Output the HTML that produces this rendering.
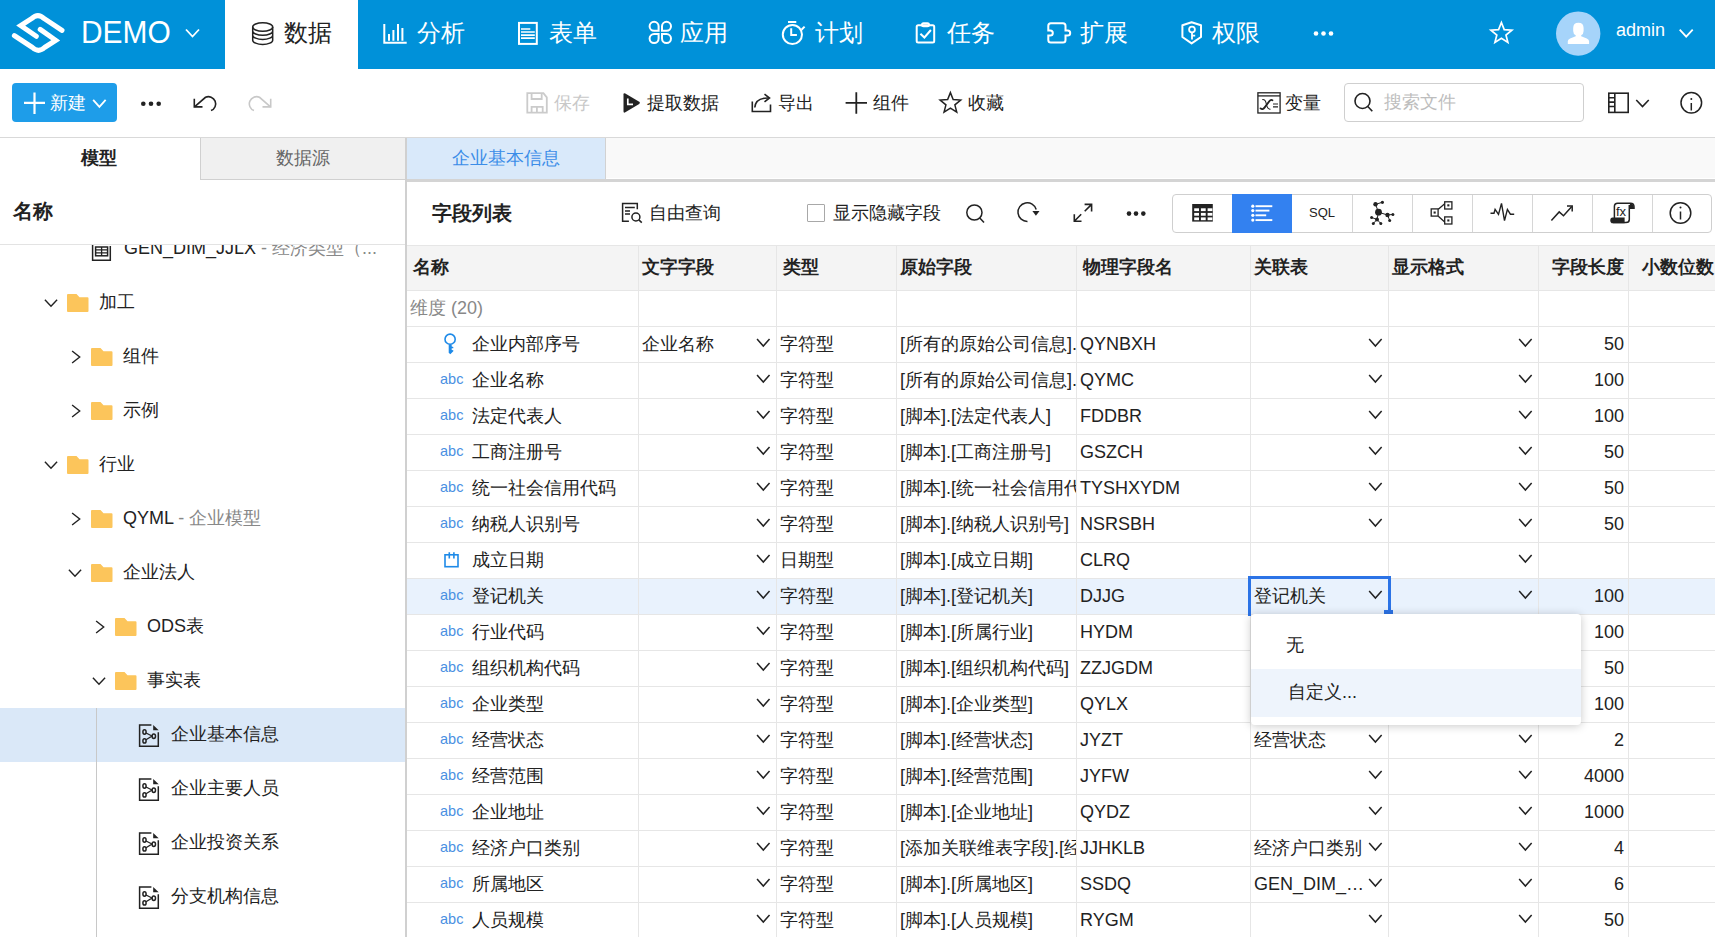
<!DOCTYPE html><html><head><meta charset="utf-8"><style>
*{margin:0;padding:0;box-sizing:border-box}
html,body{width:1715px;height:937px;overflow:hidden}
body{position:relative;font-family:"Liberation Sans",sans-serif;color:#222;background:#fff}
.a{position:absolute;white-space:nowrap}
.t18{font-size:18px;line-height:20px}
svg{position:absolute;left:0;top:0;overflow:visible}
</style></head><body>
<div class="a" style="left:0px;top:0px;width:1715px;height:69px;background:#0091d9"></div>
<div class="a" style="left:225px;top:0px;width:133px;height:69px;background:#fff"></div>
<div class="a" style="left:81px;top:16px;font-size:32px;line-height:32px;color:#fff;transform:scaleX(0.935);transform-origin:0 0">DEMO</div>
<div class="a" style="left:284px;top:20px;font-size:24px;line-height:26px;color:#222;">数据</div>
<div class="a" style="left:417px;top:20px;font-size:24px;line-height:26px;color:#fff;">分析</div>
<div class="a" style="left:549px;top:20px;font-size:24px;line-height:26px;color:#fff;">表单</div>
<div class="a" style="left:680px;top:20px;font-size:24px;line-height:26px;color:#fff;">应用</div>
<div class="a" style="left:815px;top:20px;font-size:24px;line-height:26px;color:#fff;">计划</div>
<div class="a" style="left:947px;top:20px;font-size:24px;line-height:26px;color:#fff;">任务</div>
<div class="a" style="left:1080px;top:20px;font-size:24px;line-height:26px;color:#fff;">扩展</div>
<div class="a" style="left:1212px;top:20px;font-size:24px;line-height:26px;color:#fff;">权限</div>
<div class="a" style="left:1616px;top:20px;font-size:18px;line-height:20px;color:#fff;">admin</div>
<div class="a" style="left:0px;top:137px;width:1715px;height:1px;background:#d9d9d9"></div>
<div class="a" style="left:12px;top:83px;width:105px;height:39px;background:#1e9de9;border-radius:4px"></div>
<div class="a" style="left:50px;top:93px;font-size:18px;line-height:20px;color:#fff;">新建</div>
<div class="a" style="left:554px;top:93px;font-size:18px;line-height:20px;color:#c8c8c8;">保存</div>
<div class="a" style="left:647px;top:93px;font-size:18px;line-height:20px;color:#222;">提取数据</div>
<div class="a" style="left:778px;top:93px;font-size:18px;line-height:20px;color:#222;">导出</div>
<div class="a" style="left:873px;top:93px;font-size:18px;line-height:20px;color:#222;">组件</div>
<div class="a" style="left:968px;top:93px;font-size:18px;line-height:20px;color:#222;">收藏</div>
<div class="a" style="left:1285px;top:93px;font-size:18px;line-height:20px;color:#222;">变量</div>
<div class="a" style="left:1344px;top:83px;width:240px;height:39px;border:1px solid #cfcfcf;border-radius:4px"></div>
<div class="a" style="left:1384px;top:92px;font-size:18px;line-height:20px;color:#bdbdbd;">搜索文件</div>
<div class="a" style="left:200px;top:138px;width:205px;height:42px;background:#f0f0f0;border-left:1px solid #d0d0d0;border-bottom:1px solid #d0d0d0"></div>
<div class="a" style="left:81px;top:148px;font-size:18px;line-height:20px;color:#222;"><b>模型</b></div>
<div class="a" style="left:276px;top:148px;font-size:18px;line-height:20px;color:#666;">数据源</div>
<div class="a" style="left:13px;top:200px;font-size:19.5px;line-height:22px;color:#222;"><b>名称</b></div>
<div class="a" style="left:0;top:245px;width:405px;height:692px;overflow:hidden">
<div class="a" style="left:0;top:463px;width:405px;height:54px;background:#dae8f8"></div>
<div class="a" style="left:96px;top:463px;width:1px;height:700px;background:#c8c8c8"></div>
<div class="a" style="left:124px;top:-7px;font-size:18px;line-height:20px;color:#222">GEN_DIM_JJLX<span style="color:#888"> - 经济类型（...</span></div>
<div class="a" style="left:99px;top:47px;font-size:18px;line-height:20px;color:#222">加工</div>
<div class="a" style="left:123px;top:101px;font-size:18px;line-height:20px;color:#222">组件</div>
<div class="a" style="left:123px;top:155px;font-size:18px;line-height:20px;color:#222">示例</div>
<div class="a" style="left:99px;top:209px;font-size:18px;line-height:20px;color:#222">行业</div>
<div class="a" style="left:123px;top:263px;font-size:18px;line-height:20px;color:#222">QYML<span style="color:#888"> - 企业模型</span></div>
<div class="a" style="left:123px;top:317px;font-size:18px;line-height:20px;color:#222">企业法人</div>
<div class="a" style="left:147px;top:371px;font-size:18px;line-height:20px;color:#222">ODS表</div>
<div class="a" style="left:147px;top:425px;font-size:18px;line-height:20px;color:#222">事实表</div>
<div class="a" style="left:171px;top:479px;font-size:18px;line-height:20px;color:#222">企业基本信息</div>
<div class="a" style="left:171px;top:533px;font-size:18px;line-height:20px;color:#222">企业主要人员</div>
<div class="a" style="left:171px;top:587px;font-size:18px;line-height:20px;color:#222">企业投资关系</div>
<div class="a" style="left:171px;top:641px;font-size:18px;line-height:20px;color:#222">分支机构信息</div>
</div>
<div class="a" style="left:405px;top:138px;width:2px;height:799px;background:#d0d0d0"></div>
<div class="a" style="left:0px;top:244px;width:405px;height:1px;background:#e3e3e3"></div>
<div class="a" style="left:407px;top:138px;width:1308px;height:41px;background:#f9f9f9;border-left:1px solid #fff;border-bottom:1px solid #fff"></div>
<div class="a" style="left:407px;top:138px;width:199px;height:41px;background:#d9e9fa;border-right:1px solid #d2d2d2"></div>
<div class="a" style="left:452px;top:148px;font-size:18px;line-height:20px;color:#3b8de8;">企业基本信息</div>
<div class="a" style="left:407px;top:179px;width:1308px;height:3px;background:#d4d4d4"></div>
<div class="a" style="left:432px;top:202px;font-size:19.6px;line-height:22px;color:#222;"><b>字段列表</b></div>
<div class="a" style="left:649px;top:203px;font-size:18px;line-height:20px;color:#222;">自由查询</div>
<div class="a" style="left:807px;top:204px;width:18px;height:18px;border:1.5px solid #a8a8a8;border-radius:1px"></div>
<div class="a" style="left:833px;top:203px;font-size:18px;line-height:20px;color:#222;">显示隐藏字段</div>
<div class="a" style="left:1172px;top:194px;width:540px;height:39px;border:1px solid #cfcfcf;border-radius:4px"></div>
<div class="a" style="left:1232px;top:194px;width:60px;height:39px;background:#3381f0"></div>
<div class="a" style="left:1352px;top:195px;width:1px;height:37px;background:#d6d6d6"></div>
<div class="a" style="left:1412px;top:195px;width:1px;height:37px;background:#d6d6d6"></div>
<div class="a" style="left:1472px;top:195px;width:1px;height:37px;background:#d6d6d6"></div>
<div class="a" style="left:1532px;top:195px;width:1px;height:37px;background:#d6d6d6"></div>
<div class="a" style="left:1592px;top:195px;width:1px;height:37px;background:#d6d6d6"></div>
<div class="a" style="left:1652px;top:195px;width:1px;height:37px;background:#d6d6d6"></div>
<div class="a" style="left:1309px;top:205px;font-size:13px;line-height:16px;color:#222;">SQL</div>
<div class="a" style="left:407px;top:245px;width:1308px;height:46px;background:#f4f4f4;border-top:1px solid #e6e6e6;border-bottom:1px solid #e6e6e6"></div>
<div class="a" style="left:413px;top:256.5px;font-size:18px;line-height:20px;color:#222;"><b>名称</b></div>
<div class="a" style="left:642px;top:256.5px;font-size:18px;line-height:20px;color:#222;"><b>文字字段</b></div>
<div class="a" style="left:783px;top:256.5px;font-size:18px;line-height:20px;color:#222;"><b>类型</b></div>
<div class="a" style="left:900px;top:256.5px;font-size:18px;line-height:20px;color:#222;"><b>原始字段</b></div>
<div class="a" style="left:1083px;top:256.5px;font-size:18px;line-height:20px;color:#222;"><b>物理字段名</b></div>
<div class="a" style="left:1254px;top:256.5px;font-size:18px;line-height:20px;color:#222;"><b>关联表</b></div>
<div class="a" style="left:1392px;top:256.5px;font-size:18px;line-height:20px;color:#222;"><b>显示格式</b></div>
<div class="a" style="left:1552px;top:256.5px;font-size:18px;line-height:20px;color:#222;"><b>字段长度</b></div>
<div class="a" style="left:1642px;top:256.5px;font-size:18px;line-height:20px;color:#222;"><b>小数位数</b></div>
<div class="a" style="left:410px;top:298px;font-size:18px;line-height:20px;color:#888;">维度 (20)</div>
<div class="a" style="left:407px;top:578px;width:1308px;height:36px;background:#e9f2fd"></div>
<div class="a" style="left:407px;top:326px;width:1308px;height:1px;background:#e6e6e6"></div>
<div class="a" style="left:407px;top:362px;width:1308px;height:1px;background:#e6e6e6"></div>
<div class="a" style="left:407px;top:398px;width:1308px;height:1px;background:#e6e6e6"></div>
<div class="a" style="left:407px;top:434px;width:1308px;height:1px;background:#e6e6e6"></div>
<div class="a" style="left:407px;top:470px;width:1308px;height:1px;background:#e6e6e6"></div>
<div class="a" style="left:407px;top:506px;width:1308px;height:1px;background:#e6e6e6"></div>
<div class="a" style="left:407px;top:542px;width:1308px;height:1px;background:#e6e6e6"></div>
<div class="a" style="left:407px;top:578px;width:1308px;height:1px;background:#e6e6e6"></div>
<div class="a" style="left:407px;top:614px;width:1308px;height:1px;background:#e6e6e6"></div>
<div class="a" style="left:407px;top:650px;width:1308px;height:1px;background:#e6e6e6"></div>
<div class="a" style="left:407px;top:686px;width:1308px;height:1px;background:#e6e6e6"></div>
<div class="a" style="left:407px;top:722px;width:1308px;height:1px;background:#e6e6e6"></div>
<div class="a" style="left:407px;top:758px;width:1308px;height:1px;background:#e6e6e6"></div>
<div class="a" style="left:407px;top:794px;width:1308px;height:1px;background:#e6e6e6"></div>
<div class="a" style="left:407px;top:830px;width:1308px;height:1px;background:#e6e6e6"></div>
<div class="a" style="left:407px;top:866px;width:1308px;height:1px;background:#e6e6e6"></div>
<div class="a" style="left:407px;top:902px;width:1308px;height:1px;background:#e6e6e6"></div>
<div class="a" style="left:407px;top:938px;width:1308px;height:1px;background:#e6e6e6"></div>
<div class="a" style="left:638px;top:245px;width:1px;height:692px;background:#e6e6e6"></div>
<div class="a" style="left:776px;top:245px;width:1px;height:692px;background:#e6e6e6"></div>
<div class="a" style="left:896px;top:245px;width:1px;height:692px;background:#e6e6e6"></div>
<div class="a" style="left:1076px;top:245px;width:1px;height:692px;background:#e6e6e6"></div>
<div class="a" style="left:1250px;top:245px;width:1px;height:692px;background:#e6e6e6"></div>
<div class="a" style="left:1388px;top:245px;width:1px;height:692px;background:#e6e6e6"></div>
<div class="a" style="left:1538px;top:245px;width:1px;height:692px;background:#e6e6e6"></div>
<div class="a" style="left:1628px;top:245px;width:1px;height:692px;background:#e6e6e6"></div>
<div class="a" style="left:472px;top:334px;font-size:18px;line-height:20px;color:#222;">企业内部序号</div>
<div class="a" style="left:642px;top:334px;font-size:18px;line-height:20px;color:#222;">企业名称</div>
<div class="a" style="left:780px;top:334px;font-size:18px;line-height:20px;color:#222;">字符型</div>
<div class="a" style="left:900px;top:334px;width:176px;overflow:hidden;font-size:18px;line-height:20px;color:#222">[所有的原始公司信息].[企业内部序号]</div>
<div class="a" style="left:1080px;top:334px;font-size:18px;line-height:20px;color:#222;">QYNBXH</div>
<div class="a" style="left:1540px;top:334px;width:84px;text-align:right;font-size:18px;line-height:20px;color:#222">50</div>
<div class="a" style="left:472px;top:370px;font-size:18px;line-height:20px;color:#222;">企业名称</div>
<div class="a" style="left:440px;top:371px;font-size:14.5px;line-height:16px;color:#4a90e2;">abc</div>
<div class="a" style="left:780px;top:370px;font-size:18px;line-height:20px;color:#222;">字符型</div>
<div class="a" style="left:900px;top:370px;width:176px;overflow:hidden;font-size:18px;line-height:20px;color:#222">[所有的原始公司信息].[企业名称]</div>
<div class="a" style="left:1080px;top:370px;font-size:18px;line-height:20px;color:#222;">QYMC</div>
<div class="a" style="left:1540px;top:370px;width:84px;text-align:right;font-size:18px;line-height:20px;color:#222">100</div>
<div class="a" style="left:472px;top:406px;font-size:18px;line-height:20px;color:#222;">法定代表人</div>
<div class="a" style="left:440px;top:407px;font-size:14.5px;line-height:16px;color:#4a90e2;">abc</div>
<div class="a" style="left:780px;top:406px;font-size:18px;line-height:20px;color:#222;">字符型</div>
<div class="a" style="left:900px;top:406px;width:176px;overflow:hidden;font-size:18px;line-height:20px;color:#222">[脚本].[法定代表人]</div>
<div class="a" style="left:1080px;top:406px;font-size:18px;line-height:20px;color:#222;">FDDBR</div>
<div class="a" style="left:1540px;top:406px;width:84px;text-align:right;font-size:18px;line-height:20px;color:#222">100</div>
<div class="a" style="left:472px;top:442px;font-size:18px;line-height:20px;color:#222;">工商注册号</div>
<div class="a" style="left:440px;top:443px;font-size:14.5px;line-height:16px;color:#4a90e2;">abc</div>
<div class="a" style="left:780px;top:442px;font-size:18px;line-height:20px;color:#222;">字符型</div>
<div class="a" style="left:900px;top:442px;width:176px;overflow:hidden;font-size:18px;line-height:20px;color:#222">[脚本].[工商注册号]</div>
<div class="a" style="left:1080px;top:442px;font-size:18px;line-height:20px;color:#222;">GSZCH</div>
<div class="a" style="left:1540px;top:442px;width:84px;text-align:right;font-size:18px;line-height:20px;color:#222">50</div>
<div class="a" style="left:472px;top:478px;font-size:18px;line-height:20px;color:#222;">统一社会信用代码</div>
<div class="a" style="left:440px;top:479px;font-size:14.5px;line-height:16px;color:#4a90e2;">abc</div>
<div class="a" style="left:780px;top:478px;font-size:18px;line-height:20px;color:#222;">字符型</div>
<div class="a" style="left:900px;top:478px;width:176px;overflow:hidden;font-size:18px;line-height:20px;color:#222">[脚本].[统一社会信用代码]</div>
<div class="a" style="left:1080px;top:478px;font-size:18px;line-height:20px;color:#222;">TYSHXYDM</div>
<div class="a" style="left:1540px;top:478px;width:84px;text-align:right;font-size:18px;line-height:20px;color:#222">50</div>
<div class="a" style="left:472px;top:514px;font-size:18px;line-height:20px;color:#222;">纳税人识别号</div>
<div class="a" style="left:440px;top:515px;font-size:14.5px;line-height:16px;color:#4a90e2;">abc</div>
<div class="a" style="left:780px;top:514px;font-size:18px;line-height:20px;color:#222;">字符型</div>
<div class="a" style="left:900px;top:514px;width:176px;overflow:hidden;font-size:18px;line-height:20px;color:#222">[脚本].[纳税人识别号]</div>
<div class="a" style="left:1080px;top:514px;font-size:18px;line-height:20px;color:#222;">NSRSBH</div>
<div class="a" style="left:1540px;top:514px;width:84px;text-align:right;font-size:18px;line-height:20px;color:#222">50</div>
<div class="a" style="left:472px;top:550px;font-size:18px;line-height:20px;color:#222;">成立日期</div>
<div class="a" style="left:780px;top:550px;font-size:18px;line-height:20px;color:#222;">日期型</div>
<div class="a" style="left:900px;top:550px;width:176px;overflow:hidden;font-size:18px;line-height:20px;color:#222">[脚本].[成立日期]</div>
<div class="a" style="left:1080px;top:550px;font-size:18px;line-height:20px;color:#222;">CLRQ</div>
<div class="a" style="left:472px;top:586px;font-size:18px;line-height:20px;color:#222;">登记机关</div>
<div class="a" style="left:440px;top:587px;font-size:14.5px;line-height:16px;color:#4a90e2;">abc</div>
<div class="a" style="left:780px;top:586px;font-size:18px;line-height:20px;color:#222;">字符型</div>
<div class="a" style="left:900px;top:586px;width:176px;overflow:hidden;font-size:18px;line-height:20px;color:#222">[脚本].[登记机关]</div>
<div class="a" style="left:1080px;top:586px;font-size:18px;line-height:20px;color:#222;">DJJG</div>
<div class="a" style="left:1254px;top:586px;font-size:18px;line-height:20px;color:#222;">登记机关</div>
<div class="a" style="left:1540px;top:586px;width:84px;text-align:right;font-size:18px;line-height:20px;color:#222">100</div>
<div class="a" style="left:472px;top:622px;font-size:18px;line-height:20px;color:#222;">行业代码</div>
<div class="a" style="left:440px;top:623px;font-size:14.5px;line-height:16px;color:#4a90e2;">abc</div>
<div class="a" style="left:780px;top:622px;font-size:18px;line-height:20px;color:#222;">字符型</div>
<div class="a" style="left:900px;top:622px;width:176px;overflow:hidden;font-size:18px;line-height:20px;color:#222">[脚本].[所属行业]</div>
<div class="a" style="left:1080px;top:622px;font-size:18px;line-height:20px;color:#222;">HYDM</div>
<div class="a" style="left:1540px;top:622px;width:84px;text-align:right;font-size:18px;line-height:20px;color:#222">100</div>
<div class="a" style="left:472px;top:658px;font-size:18px;line-height:20px;color:#222;">组织机构代码</div>
<div class="a" style="left:440px;top:659px;font-size:14.5px;line-height:16px;color:#4a90e2;">abc</div>
<div class="a" style="left:780px;top:658px;font-size:18px;line-height:20px;color:#222;">字符型</div>
<div class="a" style="left:900px;top:658px;width:176px;overflow:hidden;font-size:18px;line-height:20px;color:#222">[脚本].[组织机构代码]</div>
<div class="a" style="left:1080px;top:658px;font-size:18px;line-height:20px;color:#222;">ZZJGDM</div>
<div class="a" style="left:1540px;top:658px;width:84px;text-align:right;font-size:18px;line-height:20px;color:#222">50</div>
<div class="a" style="left:472px;top:694px;font-size:18px;line-height:20px;color:#222;">企业类型</div>
<div class="a" style="left:440px;top:695px;font-size:14.5px;line-height:16px;color:#4a90e2;">abc</div>
<div class="a" style="left:780px;top:694px;font-size:18px;line-height:20px;color:#222;">字符型</div>
<div class="a" style="left:900px;top:694px;width:176px;overflow:hidden;font-size:18px;line-height:20px;color:#222">[脚本].[企业类型]</div>
<div class="a" style="left:1080px;top:694px;font-size:18px;line-height:20px;color:#222;">QYLX</div>
<div class="a" style="left:1540px;top:694px;width:84px;text-align:right;font-size:18px;line-height:20px;color:#222">100</div>
<div class="a" style="left:472px;top:730px;font-size:18px;line-height:20px;color:#222;">经营状态</div>
<div class="a" style="left:440px;top:731px;font-size:14.5px;line-height:16px;color:#4a90e2;">abc</div>
<div class="a" style="left:780px;top:730px;font-size:18px;line-height:20px;color:#222;">字符型</div>
<div class="a" style="left:900px;top:730px;width:176px;overflow:hidden;font-size:18px;line-height:20px;color:#222">[脚本].[经营状态]</div>
<div class="a" style="left:1080px;top:730px;font-size:18px;line-height:20px;color:#222;">JYZT</div>
<div class="a" style="left:1254px;top:730px;font-size:18px;line-height:20px;color:#222;">经营状态</div>
<div class="a" style="left:1540px;top:730px;width:84px;text-align:right;font-size:18px;line-height:20px;color:#222">2</div>
<div class="a" style="left:472px;top:766px;font-size:18px;line-height:20px;color:#222;">经营范围</div>
<div class="a" style="left:440px;top:767px;font-size:14.5px;line-height:16px;color:#4a90e2;">abc</div>
<div class="a" style="left:780px;top:766px;font-size:18px;line-height:20px;color:#222;">字符型</div>
<div class="a" style="left:900px;top:766px;width:176px;overflow:hidden;font-size:18px;line-height:20px;color:#222">[脚本].[经营范围]</div>
<div class="a" style="left:1080px;top:766px;font-size:18px;line-height:20px;color:#222;">JYFW</div>
<div class="a" style="left:1540px;top:766px;width:84px;text-align:right;font-size:18px;line-height:20px;color:#222">4000</div>
<div class="a" style="left:472px;top:802px;font-size:18px;line-height:20px;color:#222;">企业地址</div>
<div class="a" style="left:440px;top:803px;font-size:14.5px;line-height:16px;color:#4a90e2;">abc</div>
<div class="a" style="left:780px;top:802px;font-size:18px;line-height:20px;color:#222;">字符型</div>
<div class="a" style="left:900px;top:802px;width:176px;overflow:hidden;font-size:18px;line-height:20px;color:#222">[脚本].[企业地址]</div>
<div class="a" style="left:1080px;top:802px;font-size:18px;line-height:20px;color:#222;">QYDZ</div>
<div class="a" style="left:1540px;top:802px;width:84px;text-align:right;font-size:18px;line-height:20px;color:#222">1000</div>
<div class="a" style="left:472px;top:838px;font-size:18px;line-height:20px;color:#222;">经济户口类别</div>
<div class="a" style="left:440px;top:839px;font-size:14.5px;line-height:16px;color:#4a90e2;">abc</div>
<div class="a" style="left:780px;top:838px;font-size:18px;line-height:20px;color:#222;">字符型</div>
<div class="a" style="left:900px;top:838px;width:176px;overflow:hidden;font-size:18px;line-height:20px;color:#222">[添加关联维表字段].[经济户口类别]</div>
<div class="a" style="left:1080px;top:838px;font-size:18px;line-height:20px;color:#222;">JJHKLB</div>
<div class="a" style="left:1254px;top:838px;font-size:18px;line-height:20px;color:#222;">经济户口类别</div>
<div class="a" style="left:1540px;top:838px;width:84px;text-align:right;font-size:18px;line-height:20px;color:#222">4</div>
<div class="a" style="left:472px;top:874px;font-size:18px;line-height:20px;color:#222;">所属地区</div>
<div class="a" style="left:440px;top:875px;font-size:14.5px;line-height:16px;color:#4a90e2;">abc</div>
<div class="a" style="left:780px;top:874px;font-size:18px;line-height:20px;color:#222;">字符型</div>
<div class="a" style="left:900px;top:874px;width:176px;overflow:hidden;font-size:18px;line-height:20px;color:#222">[脚本].[所属地区]</div>
<div class="a" style="left:1080px;top:874px;font-size:18px;line-height:20px;color:#222;">SSDQ</div>
<div class="a" style="left:1254px;top:874px;font-size:18px;line-height:20px;color:#222;">GEN_DIM_…</div>
<div class="a" style="left:1540px;top:874px;width:84px;text-align:right;font-size:18px;line-height:20px;color:#222">6</div>
<div class="a" style="left:472px;top:910px;font-size:18px;line-height:20px;color:#222;">人员规模</div>
<div class="a" style="left:440px;top:911px;font-size:14.5px;line-height:16px;color:#4a90e2;">abc</div>
<div class="a" style="left:780px;top:910px;font-size:18px;line-height:20px;color:#222;">字符型</div>
<div class="a" style="left:900px;top:910px;width:176px;overflow:hidden;font-size:18px;line-height:20px;color:#222">[脚本].[人员规模]</div>
<div class="a" style="left:1080px;top:910px;font-size:18px;line-height:20px;color:#222;">RYGM</div>
<div class="a" style="left:1540px;top:910px;width:84px;text-align:right;font-size:18px;line-height:20px;color:#222">50</div>
<div class="a" style="left:1248px;top:576px;width:143px;height:40px;border:3px solid #2b73e6;border-bottom:none"></div>
<div class="a" style="left:1384px;top:610px;width:9px;height:4px;background:#2b73e6"></div>
<svg width="1715" height="937" viewBox="0 0 1715 937"><path d="M62,30.3 L44.2,18.6 Q37.9,12.6 31.6,18.6 L20.7,25.6 L36.3,36.3" fill="none" stroke="#fff" stroke-width="5" stroke-linecap="round" stroke-linejoin="miter"/><path d="M14.4,35.6 L32.2,47.3 Q38.5,53.3 44.8,47.3 L55.7,40.3 L40.2,29.4" fill="none" stroke="#fff" stroke-width="5" stroke-linecap="round" stroke-linejoin="miter"/><path d="M186.0,29.5 L192.5,36.5 L199.0,29.5" fill="none" stroke="#fff" stroke-width="1.8"/><g fill="none" stroke="#222" stroke-width="1.5"><ellipse cx="262.7" cy="27" rx="10" ry="4.2"/><path d="M252.7,27 V40.2 M272.7,27 V40.2 M252.7,31 A10,4.2 0 0 0 272.7,31 M252.7,35.2 A10,4.2 0 0 0 272.7,35.2 M252.7,40.2 A10,4.2 0 0 0 272.7,40.2"/></g><g fill="none" stroke="#fff" stroke-width="2"><path d="M384.3,24 V42.8 H406.7"/><path d="M389,34 V40.8 M393.4,30 V40.8 M398,24 V40.8 M402.4,28 V40.8"/></g><g fill="none" stroke="#fff"><rect x="519" y="22.9" width="17.8" height="21" stroke-width="2"/><path d="M521,29 H530.3 M521,32 H534.8 M521,35.1 H534.8 M521,38.1 H534.8" stroke-width="1.6"/></g><path d="M654.1,30.8 A4.5,4.5 0 1 1 658.6,26.3 L658.6,30.8 Z M662.0,26.3 A4.5,4.5 0 1 1 666.5,30.8 L662.0,30.8 Z M658.6,38.6 A4.5,4.5 0 1 1 654.1,34.1 L658.6,34.1 Z M666.5,34.1 A4.5,4.5 0 1 1 662.0,38.6 L662.0,34.1 Z" fill="none" stroke="#fff" stroke-width="2"/><g fill="none" stroke="#fff" stroke-width="2"><circle cx="792.4" cy="34.5" r="9.6"/><path d="M788,22 H796.3 M801.5,29.8 L804.6,26.6 M791.2,28.2 V35.1 H796.9"/></g><g fill="none" stroke="#fff" stroke-width="2"><rect x="916.7" y="25.3" width="17.5" height="17.3" rx="1.5"/><rect x="922" y="23.3" width="7" height="3" rx="1.5"/><path d="M920.4,33.7 L924.4,37.5 L930.9,30"/></g><path d="M1050.8,23.3 H1063 Q1065.5,23.3 1065.5,25.8 V30.5 H1067.7 A2.5,2.5 0 0 1 1067.7,35.5 H1065.5 V40.1 Q1065.5,42.6 1063,42.6 H1050.8 Q1048.3,42.6 1048.3,40.1 V35.5 H1050.3 A2.5,2.5 0 0 0 1050.3,30.5 H1048.3 V25.8 Q1048.3,23.3 1050.8,23.3 Z" fill="none" stroke="#fff" stroke-width="2"/><g fill="none" stroke="#fff" stroke-width="2"><path d="M1191.6,22.2 L1182.4,25.2 V37 L1191.6,43.4 L1201,37 V25.2 Z" stroke-linejoin="round"/><circle cx="1192" cy="29.6" r="2.9" stroke-width="1.8"/><path d="M1192,32.5 V39.5 M1192,35.7 H1195.2" stroke-width="1.8"/></g><circle cx="1316" cy="33.5" r="2.3" fill="#fff"/><circle cx="1323.5" cy="33.5" r="2.3" fill="#fff"/><circle cx="1331" cy="33.5" r="2.3" fill="#fff"/><polygon points="1501.40,22.50 1504.22,29.62 1511.86,30.10 1505.97,34.98 1507.87,42.40 1501.40,38.30 1494.93,42.40 1496.83,34.98 1490.94,30.10 1498.58,29.62" fill="none" stroke="#fff" stroke-width="1.7" stroke-linejoin="miter"/><circle cx="1578.2" cy="33.6" r="22.2" fill="#a6d4fa"/><path d="M1573.2,28 Q1573.2,22.8 1578.4,22.8 Q1583.6,22.8 1583.6,28 V31 Q1583.6,34.3 1581.2,35.2 V36.2 L1586.8,38.4 Q1589.1,39.3 1589.1,41.2 V43.9 H1567.8 V41.2 Q1567.8,39.3 1570.1,38.4 L1575.7,36.2 V35.2 Q1573.2,34.3 1573.2,31 Z" fill="#fff"/><path d="M1679.7,29.6 L1686.2,36.6 L1692.7,29.6" fill="none" stroke="#fff" stroke-width="1.8"/><path d="M24,102.9 H45 M34.5,92.4 V114" stroke="#fff" stroke-width="2.2"/><path d="M93.15,99.8 L99.4,106.8 L105.65,99.8" fill="none" stroke="#fff" stroke-width="1.8"/><circle cx="143.3" cy="103.8" r="2.3" fill="#222"/><circle cx="151" cy="103.8" r="2.3" fill="#222"/><circle cx="158.7" cy="103.8" r="2.3" fill="#222"/><g fill="none" stroke="#222" stroke-width="1.6"><path d="M194.5,106.8 L205.5,97.3 A7.2,7.2 0 1 1 211,110.6"/><path d="M194.3,98.8 V106.9 H202.5"/></g><g fill="none" stroke="#c8c8c8" stroke-width="1.6"><path d="M270.5,106.8 L259.5,97.3 A7.2,7.2 0 1 0 254,110.6"/><path d="M270.7,98.8 V106.9 H262.5"/></g><g fill="none" stroke="#cbcbcb" stroke-width="1.8"><path d="M527.3,93.2 H543.4 L546.8,97.4 V112.7 H527.3 Z"/><path d="M531.6,93.2 V99 H541.7 V93.2"/><path d="M531.6,112.7 V106.9 H542.7 V112.7 M536.9,106.9 V112.7"/></g><path d="M623.5,94.5 Q623.5,92.6 625.3,93.6 L639.2,101.8 Q640.8,102.9 639.2,104 L625.3,112.3 Q623.5,113.3 623.5,111.3 Z" fill="#222"/><path d="M627.8,98.5 V104.3 H633" fill="none" stroke="#fff" stroke-width="1.7"/><g fill="none" stroke="#222" stroke-width="1.6"><path d="M752.3,101.5 V111.5 H770.5 V104.5"/><path d="M754.8,107.5 Q755.5,97.8 768.5,98"/><path d="M764.5,94.2 L769.5,98 L764.5,101.8"/></g><path d="M845.6,102.9 H867 M856.3,92.2 V113.8" stroke="#222" stroke-width="1.8"/><polygon points="950.40,92.60 953.16,99.60 960.67,100.06 954.87,104.85 956.75,112.14 950.40,108.10 944.05,112.14 945.93,104.85 940.13,100.06 947.64,99.60" fill="none" stroke="#222" stroke-width="1.5" stroke-linejoin="miter"/><g fill="none" stroke="#222" stroke-width="1.5"><rect x="1257.9" y="92.8" width="22.2" height="20.2" stroke-width="1.3"/><path d="M1257.9,95.9 H1280" stroke-width="1.3"/><path d="M1273,104 H1278 M1273,106.8 H1278" stroke-width="1.2"/></g><path d="M1260.6,108.4 Q1262.5,110.2 1264.5,107.6 L1269.3,101.2 Q1270.8,99.2 1272.4,100.2" fill="none" stroke="#222" stroke-width="1.9" stroke-linecap="round"/><path d="M1262.3,99.6 Q1265.3,99.2 1266.2,103.5 Q1267.2,109.2 1270.4,109.4" fill="none" stroke="#222" stroke-width="1.1"/><g fill="none" stroke="#222" stroke-width="1.6"><circle cx="1362.5" cy="101" r="7.5"/><path d="M1367.8,106.5 L1372.3,111.3"/></g><g fill="none" stroke="#222" stroke-width="1.6"><rect x="1608.8" y="93.2" width="19.4" height="19.2"/><path d="M1614.8,93.2 V112.4 M1608.8,97.7 H1614.8 M1608.8,102.1 H1614.8 M1608.8,106.5 H1614.8"/></g><path d="M1636.25,100.05 L1642.5,106.55 L1648.75,100.05" fill="none" stroke="#222" stroke-width="1.6"/><g fill="none" stroke="#222" stroke-width="1.5"><circle cx="1691.3" cy="102.8" r="10.3"/><path d="M1691.3,103 V110.5"/></g><circle cx="1691.3" cy="99" r="1" fill="#222"/><g fill="none" stroke="#222" stroke-width="1.5"><path d="M628.9,221.2 H622.6 V203.5 H637.3 V209.3"/><path d="M625,207.6 H634.8 M625,211.1 H630 M625,213.9 H630"/><circle cx="635.9" cy="217" r="4"/><path d="M638.8,219.9 L641.8,222.6"/></g><g fill="none" stroke="#222" stroke-width="1.5"><circle cx="974.4" cy="212.5" r="7.6"/><path d="M979.8,218 L984,222.5"/></g><g fill="none" stroke="#222" stroke-width="1.5"><path d="M1027.5,221.4 A9.3,9.3 0 1 1 1036.2,209.5"/></g><path d="M1032.4,211 L1039.5,211 L1035.9,215.8 Z" fill="#222"/><g fill="none" stroke="#222" stroke-width="1.6"><path d="M1074.3,214.2 V221.2 H1081.5 M1074.3,221.2 L1081.2,214.3"/><path d="M1084.6,204.4 H1091.6 V211.5 M1091.6,204.4 L1084.7,211.3"/></g><circle cx="1129" cy="213.6" r="2.3" fill="#222"/><circle cx="1136" cy="213.6" r="2.3" fill="#222"/><circle cx="1143.3" cy="213.6" r="2.3" fill="#222"/><g><rect x="1192.2" y="204" width="20.6" height="17.6" fill="#222"/><rect x="1194.2" y="208.3" width="4.8" height="2.8" fill="#fff"/><rect x="1194.2" y="212.9" width="4.8" height="2.8" fill="#fff"/><rect x="1194.2" y="217.4" width="4.8" height="2.8" fill="#fff"/><rect x="1200.9" y="208.3" width="4.8" height="2.8" fill="#fff"/><rect x="1200.9" y="212.9" width="4.8" height="2.8" fill="#fff"/><rect x="1200.9" y="217.4" width="4.8" height="2.8" fill="#fff"/><rect x="1207.6" y="208.3" width="4.8" height="2.8" fill="#fff"/><rect x="1207.6" y="212.9" width="4.8" height="2.8" fill="#fff"/><rect x="1207.6" y="217.4" width="4.8" height="2.8" fill="#fff"/></g><circle cx="1252.8" cy="206.2" r="1.6" fill="#fff"/><path d="M1255.5,206.2 H1272.3" stroke="#fff" stroke-width="1.9"/><circle cx="1252.8" cy="210.6" r="1.6" fill="#fff"/><path d="M1255.5,210.6 H1269.4" stroke="#fff" stroke-width="1.9"/><circle cx="1252.8" cy="215.3" r="1.6" fill="#fff"/><path d="M1255.5,215.3 H1266.2" stroke="#fff" stroke-width="1.9"/><circle cx="1252.8" cy="220.1" r="1.6" fill="#fff"/><path d="M1255.5,220.1 H1272.3" stroke="#fff" stroke-width="1.9"/><g stroke="#222" stroke-width="1" fill="none"><path d="M1375.5,204.3 L1382.4,202.3 M1375.5,204.3 L1378.5,212.2 L1387.5,215 L1392.9,214.4 M1387.5,215 L1389.7,220.4 M1378.5,212.2 L1377,219.6 L1371.6,217.4 M1377,219.6 L1373.3,223.4 M1377,219.6 L1380.8,223.4"/></g><g fill="#222"><circle cx="1378.5" cy="212.2" r="3.4"/><circle cx="1375.5" cy="204.3" r="2.2"/><circle cx="1382.4" cy="202.3" r="1.6"/><circle cx="1387.5" cy="215" r="2.2"/><circle cx="1392.9" cy="214.4" r="1.5"/><circle cx="1389.7" cy="220.4" r="1.5"/><circle cx="1377" cy="219.6" r="2"/><circle cx="1371.6" cy="217.4" r="1.5"/><circle cx="1373.3" cy="223.4" r="1.5"/><circle cx="1380.8" cy="223.4" r="1.5"/></g><g fill="none" stroke="#222" stroke-width="1.3"><rect x="1431.2" y="208.9" width="6.9" height="7.2"/><rect x="1444.7" y="201.8" width="7.2" height="7.2"/><rect x="1444.7" y="216.9" width="7.2" height="7.1"/><path d="M1438.3,209.3 L1444.4,204 M1438.3,216.3 L1444.4,221.8"/></g><g fill="#222"><rect x="1433.6" y="211.5" width="2.1" height="2.1"/><rect x="1447.3" y="204.3" width="2.1" height="2.1"/><rect x="1447.3" y="219.4" width="2.1" height="2.1"/></g><path d="M1490.5,213.3 H1494 L1495.1,209.4 L1498.5,214.4 L1501.5,203.4 L1504.5,220.6 L1507.4,209.4 L1510.4,214.2 H1514.2" fill="none" stroke="#222" stroke-width="1.4" stroke-linejoin="miter"/><g fill="none" stroke="#222" stroke-width="1.5"><path d="M1551.4,220.4 L1559.2,211.9 L1563.5,215.8 L1571.8,206.6"/><path d="M1567,206.1 H1572.2 V211.5"/></g><g fill="none" stroke="#222" stroke-width="1.5"><path d="M1614.4,218 V206.5 Q1614.4,203.2 1617.7,203.2 H1630.5 Q1634,203.2 1634,206.8 V208.2 H1629.3"/><path d="M1629.3,205 V219.5 Q1629.3,222.6 1626,222.6 H1613"/></g><path d="M1630,203.6 Q1633.8,203.8 1633.8,207 V208.3 H1629.5 Z" fill="#222"/><path d="M1612.5,217.6 H1624.6 V223.2 H1612.8 Q1610.3,223.2 1610.3,220.4 Q1610.3,217.6 1612.5,217.6 Z" fill="#222"/><text x="1616" y="215.9" font-family="Liberation Sans" font-size="13" fill="#222">fx</text><g fill="none" stroke="#222" stroke-width="1.5"><circle cx="1680.5" cy="213" r="10.3"/><path d="M1680.5,211.5 V219.5"/></g><circle cx="1680.5" cy="207.5" r="1" fill="#222"/><defs><clipPath id="tc"><rect x="0" y="245" width="405" height="692"/></clipPath></defs><g clip-path="url(#tc)"><path d="M44.9,299.7 L51,306.3 L57.1,299.7" fill="none" stroke="#222" stroke-width="1.4"/><path d="M67,295 Q67,294 68,294 H76.5 L79.5,297.2 H87.5 Q88.5,297.2 88.5,298.2 V311 Q88.5,312 87.5,312 H68 Q67,312 67,311 Z" fill="#fcc55b"/><path d="M72.10000000000001,351.0 L79.7,357 L72.10000000000001,363.0" fill="none" stroke="#222" stroke-width="1.4"/><path d="M91,349 Q91,348 92,348 H100.5 L103.5,351.2 H111.5 Q112.5,351.2 112.5,352.2 V365 Q112.5,366 111.5,366 H92 Q91,366 91,365 Z" fill="#fcc55b"/><path d="M72.10000000000001,405.0 L79.7,411 L72.10000000000001,417.0" fill="none" stroke="#222" stroke-width="1.4"/><path d="M91,403 Q91,402 92,402 H100.5 L103.5,405.2 H111.5 Q112.5,405.2 112.5,406.2 V419 Q112.5,420 111.5,420 H92 Q91,420 91,419 Z" fill="#fcc55b"/><path d="M44.9,461.7 L51,468.3 L57.1,461.7" fill="none" stroke="#222" stroke-width="1.4"/><path d="M67,457 Q67,456 68,456 H76.5 L79.5,459.2 H87.5 Q88.5,459.2 88.5,460.2 V473 Q88.5,474 87.5,474 H68 Q67,474 67,473 Z" fill="#fcc55b"/><path d="M72.10000000000001,513.0 L79.7,519 L72.10000000000001,525.0" fill="none" stroke="#222" stroke-width="1.4"/><path d="M91,511 Q91,510 92,510 H100.5 L103.5,513.2 H111.5 Q112.5,513.2 112.5,514.2 V527 Q112.5,528 111.5,528 H92 Q91,528 91,527 Z" fill="#fcc55b"/><path d="M68.9,569.7 L75,576.3 L81.1,569.7" fill="none" stroke="#222" stroke-width="1.4"/><path d="M91,565 Q91,564 92,564 H100.5 L103.5,567.2 H111.5 Q112.5,567.2 112.5,568.2 V581 Q112.5,582 111.5,582 H92 Q91,582 91,581 Z" fill="#fcc55b"/><path d="M96.10000000000001,621.0 L103.7,627 L96.10000000000001,633.0" fill="none" stroke="#222" stroke-width="1.4"/><path d="M115,619 Q115,618 116,618 H124.5 L127.5,621.2 H135.5 Q136.5,621.2 136.5,622.2 V635 Q136.5,636 135.5,636 H116 Q115,636 115,635 Z" fill="#fcc55b"/><path d="M92.9,677.7 L99,684.3 L105.1,677.7" fill="none" stroke="#222" stroke-width="1.4"/><path d="M115,673 Q115,672 116,672 H124.5 L127.5,675.2 H135.5 Q136.5,675.2 136.5,676.2 V689 Q136.5,690 135.5,690 H116 Q115,690 115,689 Z" fill="#fcc55b"/><g fill="none" stroke="#222" stroke-width="1.5"><path d="M92.6,244 V260.2 H110.3 V246"/><rect x="95.6" y="247" width="12" height="8.8"/><path d="M95.6,249.8 H107.6 M95.6,252.8 H107.6 M101.6,247 V255.8" stroke-width="1.3"/></g><g transform="translate(0,0)"><g fill="none" stroke="#222" stroke-width="1.5"><path d="M151.4,724.9 H139.6 V746.3 H158.3 V732.2"/><ellipse cx="144.5" cy="732" rx="1.6" ry="2.2"/><ellipse cx="144.5" cy="740.9" rx="1.6" ry="2.2"/><ellipse cx="153.8" cy="736.3" rx="1.7" ry="2.2"/><path d="M146,733 L152,736 L146,739.8" stroke-width="1.3"/></g><path d="M153.2,725 V730.3 H158.7 Z" fill="#222"/></g><g transform="translate(0,54)"><g fill="none" stroke="#222" stroke-width="1.5"><path d="M151.4,724.9 H139.6 V746.3 H158.3 V732.2"/><ellipse cx="144.5" cy="732" rx="1.6" ry="2.2"/><ellipse cx="144.5" cy="740.9" rx="1.6" ry="2.2"/><ellipse cx="153.8" cy="736.3" rx="1.7" ry="2.2"/><path d="M146,733 L152,736 L146,739.8" stroke-width="1.3"/></g><path d="M153.2,725 V730.3 H158.7 Z" fill="#222"/></g><g transform="translate(0,108)"><g fill="none" stroke="#222" stroke-width="1.5"><path d="M151.4,724.9 H139.6 V746.3 H158.3 V732.2"/><ellipse cx="144.5" cy="732" rx="1.6" ry="2.2"/><ellipse cx="144.5" cy="740.9" rx="1.6" ry="2.2"/><ellipse cx="153.8" cy="736.3" rx="1.7" ry="2.2"/><path d="M146,733 L152,736 L146,739.8" stroke-width="1.3"/></g><path d="M153.2,725 V730.3 H158.7 Z" fill="#222"/></g><g transform="translate(0,162)"><g fill="none" stroke="#222" stroke-width="1.5"><path d="M151.4,724.9 H139.6 V746.3 H158.3 V732.2"/><ellipse cx="144.5" cy="732" rx="1.6" ry="2.2"/><ellipse cx="144.5" cy="740.9" rx="1.6" ry="2.2"/><ellipse cx="153.8" cy="736.3" rx="1.7" ry="2.2"/><path d="M146,733 L152,736 L146,739.8" stroke-width="1.3"/></g><path d="M153.2,725 V730.3 H158.7 Z" fill="#222"/></g></g><g fill="none" stroke="#1e8ae8" stroke-width="1.6"><circle cx="450.1" cy="339.2" r="5.1"/></g><path d="M448.7,344.6 H451.7 V346.6 L453.3,346.9 V348.3 L451.7,348.3 V349.9 L453.3,350.2 V351.2 L450.3,354.2 L448.7,352.8 Z" fill="#1e8ae8"/><path d="M757.05,339.0 L763.3,346.0 L769.55,339.0" fill="none" stroke="#222" stroke-width="1.5"/><path d="M1369.15,339.0 L1375.4,346.0 L1381.65,339.0" fill="none" stroke="#222" stroke-width="1.5"/><path d="M1519.15,339.0 L1525.4,346.0 L1531.65,339.0" fill="none" stroke="#222" stroke-width="1.5"/><path d="M757.05,375.0 L763.3,382.0 L769.55,375.0" fill="none" stroke="#222" stroke-width="1.5"/><path d="M1369.15,375.0 L1375.4,382.0 L1381.65,375.0" fill="none" stroke="#222" stroke-width="1.5"/><path d="M1519.15,375.0 L1525.4,382.0 L1531.65,375.0" fill="none" stroke="#222" stroke-width="1.5"/><path d="M757.05,411.0 L763.3,418.0 L769.55,411.0" fill="none" stroke="#222" stroke-width="1.5"/><path d="M1369.15,411.0 L1375.4,418.0 L1381.65,411.0" fill="none" stroke="#222" stroke-width="1.5"/><path d="M1519.15,411.0 L1525.4,418.0 L1531.65,411.0" fill="none" stroke="#222" stroke-width="1.5"/><path d="M757.05,447.0 L763.3,454.0 L769.55,447.0" fill="none" stroke="#222" stroke-width="1.5"/><path d="M1369.15,447.0 L1375.4,454.0 L1381.65,447.0" fill="none" stroke="#222" stroke-width="1.5"/><path d="M1519.15,447.0 L1525.4,454.0 L1531.65,447.0" fill="none" stroke="#222" stroke-width="1.5"/><path d="M757.05,483.0 L763.3,490.0 L769.55,483.0" fill="none" stroke="#222" stroke-width="1.5"/><path d="M1369.15,483.0 L1375.4,490.0 L1381.65,483.0" fill="none" stroke="#222" stroke-width="1.5"/><path d="M1519.15,483.0 L1525.4,490.0 L1531.65,483.0" fill="none" stroke="#222" stroke-width="1.5"/><path d="M757.05,519.0 L763.3,526.0 L769.55,519.0" fill="none" stroke="#222" stroke-width="1.5"/><path d="M1369.15,519.0 L1375.4,526.0 L1381.65,519.0" fill="none" stroke="#222" stroke-width="1.5"/><path d="M1519.15,519.0 L1525.4,526.0 L1531.65,519.0" fill="none" stroke="#222" stroke-width="1.5"/><g fill="none" stroke="#1e8ae8" stroke-width="1.6"><rect x="445" y="554.8" width="13" height="11.9"/><path d="M449.3,552.2 V558.6 M453.9,552.2 V558.6"/></g><path d="M757.05,555.0 L763.3,562.0 L769.55,555.0" fill="none" stroke="#222" stroke-width="1.5"/><path d="M1519.15,555.0 L1525.4,562.0 L1531.65,555.0" fill="none" stroke="#222" stroke-width="1.5"/><path d="M757.05,591.0 L763.3,598.0 L769.55,591.0" fill="none" stroke="#222" stroke-width="1.5"/><path d="M1369.15,591.0 L1375.4,598.0 L1381.65,591.0" fill="none" stroke="#222" stroke-width="1.5"/><path d="M1519.15,591.0 L1525.4,598.0 L1531.65,591.0" fill="none" stroke="#222" stroke-width="1.5"/><path d="M757.05,627.0 L763.3,634.0 L769.55,627.0" fill="none" stroke="#222" stroke-width="1.5"/><path d="M757.05,663.0 L763.3,670.0 L769.55,663.0" fill="none" stroke="#222" stroke-width="1.5"/><path d="M757.05,699.0 L763.3,706.0 L769.55,699.0" fill="none" stroke="#222" stroke-width="1.5"/><path d="M757.05,735.0 L763.3,742.0 L769.55,735.0" fill="none" stroke="#222" stroke-width="1.5"/><path d="M1369.15,735.0 L1375.4,742.0 L1381.65,735.0" fill="none" stroke="#222" stroke-width="1.5"/><path d="M1519.15,735.0 L1525.4,742.0 L1531.65,735.0" fill="none" stroke="#222" stroke-width="1.5"/><path d="M757.05,771.0 L763.3,778.0 L769.55,771.0" fill="none" stroke="#222" stroke-width="1.5"/><path d="M1369.15,771.0 L1375.4,778.0 L1381.65,771.0" fill="none" stroke="#222" stroke-width="1.5"/><path d="M1519.15,771.0 L1525.4,778.0 L1531.65,771.0" fill="none" stroke="#222" stroke-width="1.5"/><path d="M757.05,807.0 L763.3,814.0 L769.55,807.0" fill="none" stroke="#222" stroke-width="1.5"/><path d="M1369.15,807.0 L1375.4,814.0 L1381.65,807.0" fill="none" stroke="#222" stroke-width="1.5"/><path d="M1519.15,807.0 L1525.4,814.0 L1531.65,807.0" fill="none" stroke="#222" stroke-width="1.5"/><path d="M757.05,843.0 L763.3,850.0 L769.55,843.0" fill="none" stroke="#222" stroke-width="1.5"/><path d="M1369.15,843.0 L1375.4,850.0 L1381.65,843.0" fill="none" stroke="#222" stroke-width="1.5"/><path d="M1519.15,843.0 L1525.4,850.0 L1531.65,843.0" fill="none" stroke="#222" stroke-width="1.5"/><path d="M757.05,879.0 L763.3,886.0 L769.55,879.0" fill="none" stroke="#222" stroke-width="1.5"/><path d="M1369.15,879.0 L1375.4,886.0 L1381.65,879.0" fill="none" stroke="#222" stroke-width="1.5"/><path d="M1519.15,879.0 L1525.4,886.0 L1531.65,879.0" fill="none" stroke="#222" stroke-width="1.5"/><path d="M757.05,915.0 L763.3,922.0 L769.55,915.0" fill="none" stroke="#222" stroke-width="1.5"/><path d="M1369.15,915.0 L1375.4,922.0 L1381.65,915.0" fill="none" stroke="#222" stroke-width="1.5"/><path d="M1519.15,915.0 L1525.4,922.0 L1531.65,915.0" fill="none" stroke="#222" stroke-width="1.5"/></svg>
<div class="a" style="left:1251px;top:614px;width:330px;height:111px;background:#fff;border-radius:4px;box-shadow:0 1px 10px rgba(0,0,0,0.22)">
<div class="a" style="left:0;top:55px;width:330px;height:48px;background:#eef4fc"></div>
<div class="a" style="left:35px;top:21px;font-size:18px;line-height:20px;color:#222">无</div>
<div class="a" style="left:37px;top:68px;font-size:18px;line-height:20px;color:#222">自定义...</div>
</div>
</body></html>
